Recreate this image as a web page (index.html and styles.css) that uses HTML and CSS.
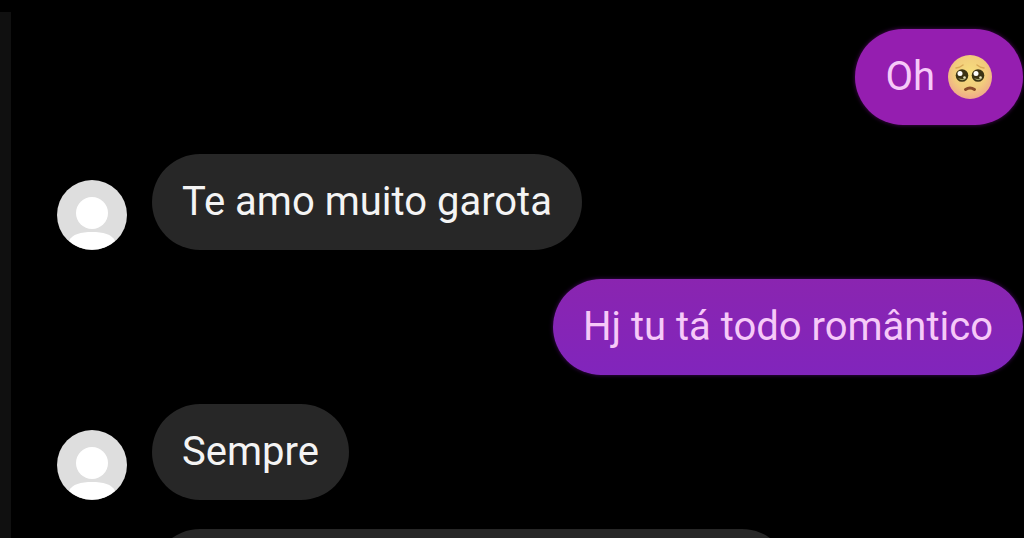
FILE: index.html
```html
<!DOCTYPE html>
<html lang="pt-BR">
<head>
  <meta charset="utf-8">
  <title>Chat</title>
  <meta name="viewport" content="width=device-width, initial-scale=1">
  <link rel="stylesheet" href="styles.css">
</head>
<body>
  <main class="chat">
    <div class="message sent">
      <p class="bubble pink">
        <span>Oh</span>
        <svg class="emoji" viewBox="0 0 46 46" role="img" aria-label="🥺">
          <defs>
            <radialGradient id="face" cx="50%" cy="40%" r="62%">
              <stop offset="0" stop-color="#f6de7c"/>
              <stop offset="0.6" stop-color="#f2cc7c"/>
              <stop offset="1" stop-color="#f0a58c"/>
            </radialGradient>
          </defs>
          <circle cx="23" cy="23" r="22" fill="url(#face)"/>
          <!-- eyebrows -->
          <path d="M9 14Q13 13.500 16 11M37 14Q33 13.500 30 11" fill="none" stroke="#d9a957" stroke-width="1.500" stroke-linecap="round"/>
          <!-- eyes -->
          <circle cx="15" cy="21.500" r="6.300" fill="#3b3314"/>
          <circle cx="31" cy="21.500" r="6.300" fill="#3b3314"/>
          <path d="M11 24Q15 28.500 19.500 24Q15 26 11 24M27 24Q31 28.500 35.500 24Q31 26 27 24" fill="#a3a36a"/>
          <circle cx="13" cy="19.500" r="2.500" fill="#fff"/>
          <circle cx="29" cy="19.500" r="2.500" fill="#fff"/>
          <circle cx="17.500" cy="23.500" r="1.300" fill="#e8e4c0"/>
          <circle cx="33.500" cy="23.500" r="1.300" fill="#e8e4c0"/>
          <!-- mouth -->
          <path d="M18.500 35.500Q23 32.500 27.500 35.500" fill="none" stroke="#8a4a2a" stroke-width="3" stroke-linecap="round"/>
        </svg>
      </p>
    </div>
    <div class="message">
      <svg class="avatar" viewBox="0 0 70 70" aria-hidden="true">
        <circle cx="35" cy="35" r="35" fill="#dedede"/>
        <circle cx="35" cy="33" r="16" fill="#fff"/>
        <path d="M12 61C15 54 24 52 35 52S55 54 58 61A35 35 0 0 1 12 61Z" fill="#fff"/>
      </svg>
      <p class="bubble">Te amo muito garota</p>
    </div>
    <div class="message sent">
      <p class="bubble violet">Hj tu tá todo romântico</p>
    </div>
    <div class="message">
      <svg class="avatar" viewBox="0 0 70 70" aria-hidden="true">
        <circle cx="35" cy="35" r="35" fill="#dedede"/>
        <circle cx="35" cy="33" r="16" fill="#fff"/>
        <path d="M12 61C15 54 24 52 35 52S55 54 58 61A35 35 0 0 1 12 61Z" fill="#fff"/>
      </svg>
      <p class="bubble">Sempre</p>
    </div>
    <div class="message">
      <div class="avatar"></div>
      <div class="bubble long"></div>
    </div>
  </main>
</body>
</html>
```

FILE: styles.css
```css
* {
  box-sizing: border-box;
}
body {
  margin: 0;
  height: 100vh;
  overflow: hidden;
  padding-top: 12px;
  background-color: #000;
  font-family: Roboto, "Liberation Sans", sans-serif;
}
.chat {
  display: flex;
  flex-direction: column;
  gap: 29px;
  padding: 17px 1px 0 46px;
  border-left: 11px solid #101010;
}
.message {
  display: flex;
  align-items: flex-end;
  gap: 25px;
}
.sent {
  justify-content: flex-end;
}
.avatar {
  flex: none;
  width: 70px;
  height: 70px;
}
.bubble {
  display: flex;
  align-items: center;
  gap: 12px;
  margin: 0;
  padding: 24px 30px;
  min-height: 96px;
  border-radius: 48px;
  background-color: #272727;
  color: #f4f4f4;
  font-size: 40px;
  line-height: 48px;
}
.pink,
.violet {
  color: #f6c9f8;
}
.pink {
  background-color: #951eb0;
  box-shadow: 0 0 4px #4c0a5c;
}
.violet {
  background: linear-gradient(#8a25b0, #8125bc);
  box-shadow: 0 0 4px #40085c;
}
.long {
  width: 66%;
}
.emoji {
  flex: none;
  width: 46px;
  height: 46px;
}
```
